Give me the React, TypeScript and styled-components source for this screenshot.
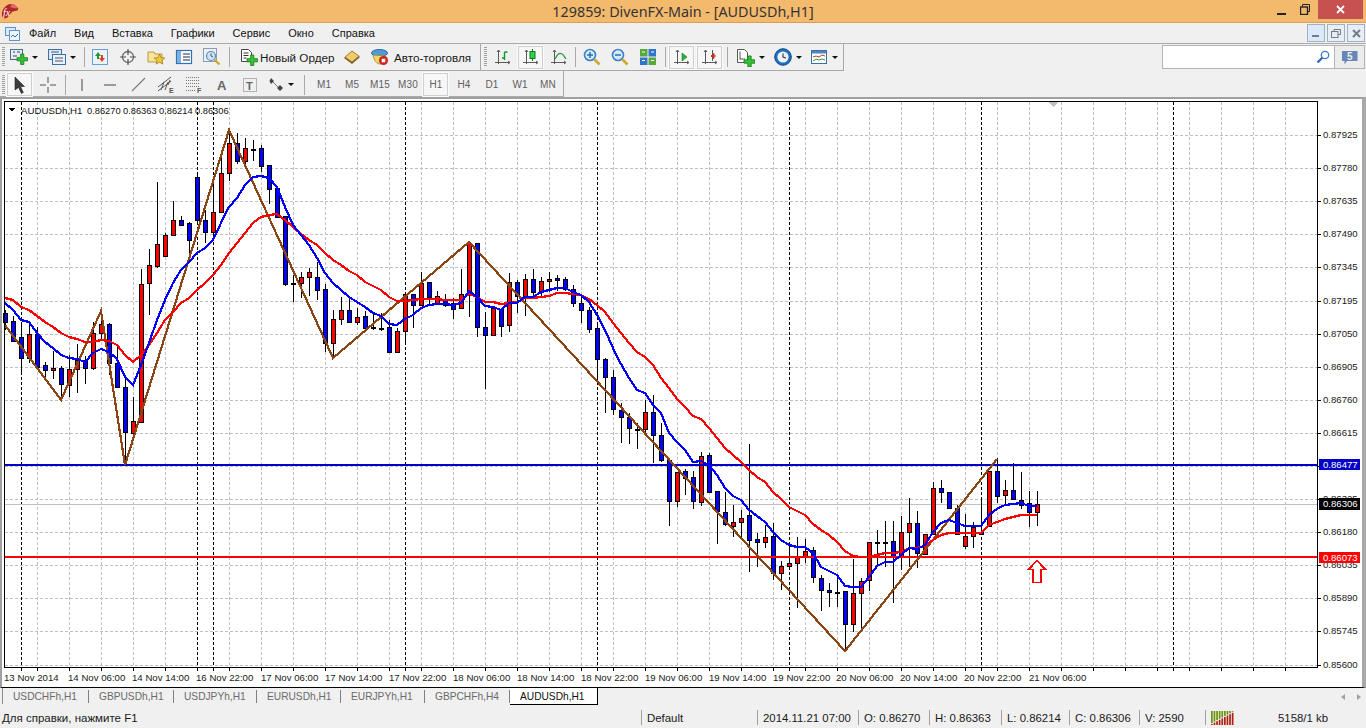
import React from "react";
import styled, { createGlobalStyle } from "styled-components";

const Global = createGlobalStyle`
  html, body { margin: 0; padding: 0; background: #f0f0f0; overflow: hidden; }
  #root { width: 1366px; height: 728px; }
`;

const FONT = `"Liberation Sans", Arial, sans-serif`;

const Window = styled.div`
  width: 1366px;
  height: 728px;
  display: flex;
  flex-direction: column;
  font-family: ${FONT};
  color: #111;
  background: #f0f0f0;
  overflow: hidden;
`;

const TitleBar = styled.div`
  height: 22px;
  flex: none;
  display: grid;
  grid-template-columns: 1fr auto 1fr;
  align-items: center;
  background: #f3b96d;
  border-bottom: 1px solid #dc9f52;
`;
const TitleIconBox = styled.div`
  display: flex;
  padding-left: 1px;
`;
const TitleText = styled.div`
  font-family: "Noto Sans", ${FONT};
  font-size: 14.35px;
  color: #333;
  padding-top: 1px;
`;
const WinControls = styled.div`
  display: flex;
  justify-content: flex-end;
  align-items: flex-start;
  height: 22px;
  padding-right: 3px;
`;
const WinButton = styled.div<{ $w: number; $red?: boolean }>`
  width: ${(p) => p.$w}px;
  height: 19px;
  display: flex;
  align-items: center;
  justify-content: center;
  background: ${(p) => (p.$red ? "#c75050" : "transparent")};
`;

const MenuBar = styled.div`
  height: 20px;
  flex: none;
  display: flex;
  align-items: center;
  border-bottom: 1px solid #a9a9a9;
`;
const MenuIconBox = styled.div`
  width: 29px;
  display: flex;
  padding-left: 5px;
  box-sizing: border-box;
`;
const MenuItems = styled.div`
  display: flex;
  gap: 18px;
  font-size: 11px;
`;
const MdiButtons = styled.div`
  margin-left: auto;
  display: flex;
  gap: 2px;
  padding-right: 1px;
`;
const MdiButton = styled.div<{ $hot?: boolean }>`
  width: 16px;
  height: 16px;
  border: 1px solid #9fb1c2;
  background: ${(p) => (p.$hot ? "#dce9f8" : "#e9eef4")};
  display: flex;
  align-items: center;
  justify-content: center;
`;

const ToolRow = styled.div<{ $h: number }>`
  height: ${(p) => p.$h}px;
  flex: none;
  display: flex;
  align-items: stretch;
`;
const ToolGroup = styled.div<{ $w: number; $pt?: number }>`
  width: ${(p) => p.$w}px;
  box-sizing: border-box;
  flex: none;
  display: flex;
  align-items: center;
  padding-top: ${(p) => p.$pt ?? 0}px;
  border-right: 1px solid #a9a9a9;
  border-bottom: 1px solid #a9a9a9;
`;
const Grip = styled.div<{ $w: number; $ml: number }>`
  width: 3px;
  height: 20px;
  margin-left: ${(p) => p.$ml}px;
  margin-right: ${(p) => p.$w - 3 - p.$ml}px;
  flex: none;
  background: repeating-linear-gradient(to bottom, #a0a0a0 0 1px, transparent 1px 2px);
`;
const Sep = styled.div<{ $w: number }>`
  width: ${(p) => p.$w}px;
  flex: none;
  height: 20px;
  display: flex;
  justify-content: center;
  &::before {
    content: "";
    width: 1px;
    height: 100%;
    background: #a9a9a9;
  }
`;
const ToolBtn = styled.div<{ $w: number; $active?: boolean; $gap?: number; $pl?: number; $start?: boolean }>`
  width: ${(p) => p.$w}px;
  flex: none;
  height: 23px;
  box-sizing: border-box;
  display: flex;
  align-items: center;
  justify-content: ${(p) => (p.$start ? "flex-start" : "center")};
  gap: ${(p) => p.$gap ?? 4}px;
  padding-left: ${(p) => p.$pl ?? 0}px;
  font-size: 11.7px;
  white-space: nowrap;
  color: #1a1a1a;
  position: relative;
  ${(p) =>
    p.$active &&
    `&::before {
      content: "";
      position: absolute;
      top: 0; bottom: 0; left: 1px; right: 2px;
      border: 1px solid #cfcfcf;
      outline: 1px solid #fbfbfb;
      background: #f7f7f7;
    }
    & > * { position: relative; }`}
`;
const Caret = styled.span`
  width: 0;
  height: 0;
  border-left: 3.5px solid transparent;
  border-right: 3.5px solid transparent;
  border-top: 3.5px solid #111;
  flex: none;
`;
const TfLabel = styled.span`
  font-size: 10px;
  color: #606060;
  letter-spacing: 0.1px;
`;
const SearchArea = styled.div`
  margin-left: auto;
  padding: 1px 1px 0 0;
  display: flex;
  align-items: flex-start;
  height: 24px;
`;
const SearchBox = styled.div`
  height: 22px;
  background: #fff;
  border: 1px solid #b4b4b4;
  display: flex;
  align-items: center;
  justify-content: flex-end;
  padding-right: 4px;
  box-sizing: content-box;
  margin-right: -1px;
  width: 167px;
`;
const ChatBtn = styled.div`
  width: 29px;
  height: 22px;
  border: 1px solid #b4b4b4;
  background: #ececec;
  display: flex;
  align-items: center;
  justify-content: center;
`;

const ChartWindow = styled.div`
  height: 588px;
  flex: none;
  background: #fff;
  border-top: 2px solid #a0a0a0;
  border-left: 2px solid #a0a0a0;
  border-right: 4px solid #a8a8a8;
  border-bottom: 1px solid #000;
  display: flex;
`;
const ChartSvg = styled.svg`
  display: block;
  font-family: ${FONT};
`;
const AxisText = styled.text<{ $white?: boolean }>`
  font-size: 9.6px;
  fill: ${(p) => (p.$white ? "#fff" : "#1a1a1a")};
`;
const TimeText = styled.text`
  font-size: 9.65px;
  fill: #1a1a1a;
`;
const HeadText = styled.text<{ $small?: boolean }>`
  font-size: ${(p) => (p.$small ? 9.3 : 9.7)}px;
  fill: #111;
`;

const TabBar = styled.div`
  height: 19px;
  flex: none;
  display: flex;
  align-items: flex-start;
  padding-left: 2px;
  position: relative;
`;
const Tab = styled.div<{ $w: number; $active?: boolean }>`
  width: ${(p) => p.$w}px;
  height: 17px;
  box-sizing: border-box;
  flex: none;
  display: flex;
  align-items: center;
  font-size: 10.2px;
  padding-left: 10px;
  color: ${(p) => (p.$active ? "#111" : "#6b6b6b")};
  background: ${(p) => (p.$active ? "#fff" : "transparent")};
  border-right: ${(p) => (p.$active ? "1px solid #000" : "0")};
  border-bottom: ${(p) => (p.$active ? "1px solid #000" : "0")};
`;
const TabSep = styled.div`
  width: 1px;
  height: 13px;
  margin-top: 2px;
  background: #808080;
  flex: none;
`;
const TabFirstEdge = styled.div`
  width: 1px;
  height: 16px;
  background: #909090;
  flex: none;
`;
const TabScroll = styled.div`
  margin-left: auto;
  display: flex;
  gap: 12px;
  padding: 6px 5px 0 0;
`;
const ScrollArrow = styled.span<{ $right?: boolean }>`
  width: 0;
  height: 0;
  border-top: 3.5px solid transparent;
  border-bottom: 3.5px solid transparent;
  ${(p) => (p.$right ? "border-left: 4px solid #a0a0a0;" : "border-right: 4px solid #a0a0a0;")}
`;

const StatusBar = styled.div`
  flex: 1;
  display: flex;
  align-items: center;
  font-size: 11.4px;
  color: #1a1a1a;
  white-space: nowrap;
`;
const StatusHelp = styled.div`
  width: 641px;
  padding-left: 2px;
  box-sizing: border-box;
  flex: none;
  font-size: 11.5px;
`;
const StatusCell = styled.div<{ $w: number }>`
  width: ${(p) => p.$w}px;
  box-sizing: border-box;
  flex: none;
  height: 15px;
  border-left: 1px solid #a0a0a0;
  padding-left: 5px;
  display: flex;
  align-items: center;
  gap: 43px;
`;

/* ---------- icons ---------- */
const PlusPath = ({ x, y, s = 1 }: { x: number; y: number; s?: number }) => (
  <path
    transform={`translate(${x} ${y}) scale(${s})`}
    d="M3.5 0h3v3.5H10v3H6.5V10h-3V6.5H0v-3h3.5z"
    fill="#35c235"
    stroke="#1e7d1e"
    strokeWidth="0.8"
  />
);
const S = ({ w = 18, h = 18, children }: { w?: number; h?: number; children: React.ReactNode }) => (
  <svg width={w} height={h} viewBox={`0 0 ${w} ${h}`}>
    {children}
  </svg>
);
const AppLogo = () => (
  <S w={18} h={16}>
    <path d="M1 13C0 7 5 1 10 1c3 0 4 2 7 4 1 2-1 3-3 3-3 0-5 3-7 6-2 2-5 2-6-1z" fill="#b3262a" />
    <path d="M11 1c3 0 4 2 6 4-2 1-5 0-8-1z" fill="#e06a60" />
    <text x="2" y="13" fontFamily="Liberation Serif" fontStyle="italic" fontSize="10" fill="#fff">fx</text>
  </S>
);
const MenuDocIcon = () => (
  <S w={15} h={15}>
    <rect x="0.5" y="1.5" width="10" height="8" fill="#dce9f8" stroke="#5e93c9" />
    <rect x="4.5" y="4.5" width="10" height="10" fill="#eef4fb" stroke="#5e93c9" />
    <path d="M6 11l2-2 2 2 3-3" fill="none" stroke="#3a6ea5" />
  </S>
);
const NewChartIcon = () => (
  <S>
    <rect x="0.5" y="1.5" width="12" height="10" fill="#e4ecf5" stroke="#4a6d90" />
    <path d="M3 4h2M3 8h4M7 4h3" stroke="#444" />
    <PlusPath x={7} y={6} s={1.05} />
  </S>
);
const ProfilesIcon = () => (
  <S>
    <rect x="0.5" y="1.5" width="13" height="10" fill="#dce9f8" stroke="#3a6ea5" />
    <rect x="4.5" y="6.5" width="13" height="10" fill="#e8f1fb" stroke="#3a6ea5" />
    <path d="M7 10h8M7 13h8M3 4h8" stroke="#556" />
  </S>
);
const MarketIcon = () => (
  <S>
    <rect x="1.5" y="1.5" width="15" height="15" fill="#edf3fb" stroke="#6b9ed2" />
    <path d="M7 4l3 4H8v3H6V8H4z" fill="#1f9b2e" />
    <path d="M11 14l-3-4h2V7h2v3h2z" fill="#e0402a" />
  </S>
);
const CrossIcon = () => (
  <S>
    <circle cx="9" cy="9" r="5.5" fill="none" stroke="#666" strokeWidth="1.3" />
    <path d="M9 1v6M9 11v6M1 9h6M11 9h6" stroke="#555" strokeWidth="1.2" />
  </S>
);
const FolderStarIcon = () => (
  <S>
    <path d="M1 4h6l1 2h7v8H1z" fill="#f6e49a" stroke="#b89a3c" />
    <path d="M12.5 6l1.6 3.6 3.7.4-2.8 2.4.8 3.7-3.3-1.9-3.3 1.9.8-3.7L7.2 10l3.7-.4z" fill="#f2c53a" stroke="#a57f16" strokeWidth="0.8" />
  </S>
);
const ListIcon = () => (
  <S>
    <rect x="1.5" y="2.5" width="15" height="13" fill="#fff" stroke="#2e71b8" strokeWidth="1.2" />
    <rect x="2" y="3" width="4" height="12" fill="#7fb0e0" />
    <path d="M8 6h7M8 9h7M8 12h7" stroke="#225" />
  </S>
);
const TesterIcon = () => (
  <S>
    <rect x="0.5" y="0.5" width="13" height="13" fill="#eceff3" stroke="#8a9db2" />
    <circle cx="8" cy="8" r="4.5" fill="#cfe3f7" stroke="#5a88b8" strokeWidth="1.2" />
    <path d="M8 5.5V8l2 1" fill="none" stroke="#456" />
    <path d="M11.5 11.5l5 5" stroke="#cda52a" strokeWidth="2.2" />
  </S>
);
const NewOrderIcon = () => (
  <S w={18} h={18}>
    <path d="M1.5 1.5h7l3 3v9h-10z" fill="#fff" stroke="#444" />
    <path d="M3.5 5h5M3.5 7.5h5M3.5 10h3" stroke="#333" />
    <PlusPath x={7} y={7} s={1.05} />
  </S>
);
const BookIcon = () => (
  <S>
    <path d="M1 10l8-7 8 6-8 7z" fill="#7d5a1c" />
    <path d="M2 9l7-6 7 5-7 6z" fill="#efcb70" stroke="#9a7326" strokeWidth="0.8" />
  </S>
);
const AutoIcon = () => (
  <S>
    <ellipse cx="8.5" cy="5" rx="8" ry="3.5" fill="#4f9bd8" stroke="#2a6aa0" />
    <path d="M2 7c1 6 4 9 7 9s4-3 6-8z" fill="#f0d466" stroke="#a08a2a" strokeWidth="0.8" />
    <circle cx="12.5" cy="12.5" r="4.5" fill="#d0201a" />
    <rect x="10.7" y="10.7" width="3.6" height="3.6" fill="#fff" />
  </S>
);
const Axes = () => (
  <path d="M3.5 1v14M0 13.5h15M2 3l1.5-2L5 3M13 12l2 1.5-2 1.5" fill="none" stroke="#5a5a5a" />
);
const BarTypeIcon = () => (
  <S w={16} h={16}>
    <Axes />
    <path d="M9.5 3v8M9.5 3h3M7 9h2.5" stroke="#0d9a28" strokeWidth="1.4" fill="none" />
  </S>
);
const CandleTypeIcon = () => (
  <S w={16} h={16}>
    <Axes />
    <path d="M9.5 0v12" stroke="#0d7a20" />
    <rect x="7" y="2.5" width="5" height="7" fill="#2fd24a" stroke="#0d7a20" />
  </S>
);
const LineTypeIcon = () => (
  <S w={16} h={16}>
    <Axes />
    <path d="M4 10c2-4 4-7 7-5 2 1 3 4 4 5" fill="none" stroke="#2a9d3a" strokeWidth="1.3" />
  </S>
);
const ZoomIcon = ({ plus }: { plus?: boolean }) => (
  <S>
    <circle cx="7" cy="7" r="5.5" fill="#d6eafa" stroke="#3b82c4" strokeWidth="1.6" />
    <path d={plus ? "M4 7h6M7 4v6" : "M4 7h6"} stroke="#2a6db0" strokeWidth="1.5" />
    <path d="M11.5 11.5l5 5" stroke="#d0a82e" strokeWidth="2.6" />
  </S>
);
const TileIcon = () => (
  <S>
    <rect x="1" y="1" width="7.5" height="7.5" fill="#5aa83c" />
    <rect x="9.5" y="1" width="7.5" height="7.5" fill="#2f76c8" />
    <rect x="1" y="9.5" width="7.5" height="7.5" fill="#2f76c8" />
    <rect x="9.5" y="9.5" width="7.5" height="7.5" fill="#5aa83c" />
    <path d="M3 4h3M12 4h3M3 12.5h3M12 12.5h3" stroke="#fff" />
  </S>
);
const AutoScrollIcon = () => (
  <S w={16} h={16}>
    <Axes />
    <path d="M8 4l5 4-5 4z" fill="#2fae3a" stroke="#17772a" strokeWidth="0.6" />
  </S>
);
const ShiftIcon = () => (
  <S w={16} h={16}>
    <Axes />
    <path d="M10.5 1v11" stroke="#555" />
    <path d="M14 7H9M9 7l3-2.5v5z" fill="#c0321e" stroke="#c0321e" />
  </S>
);
const IndicatorIcon = () => (
  <S w={19} h={19}>
    <path d="M1.5 1.5h7l3 3v10h-10z" fill="#fff" stroke="#555" />
    <path d="M4 3.5v8M4 11h5" stroke="#555" />
    <PlusPath x={8} y={8} s={1.1} />
  </S>
);
const ClockIcon = () => (
  <S>
    <circle cx="9" cy="9" r="8.3" fill="#1f6fbe" stroke="#0f4a8c" />
    <circle cx="9" cy="9" r="5.6" fill="#eef4fa" />
    <path d="M9 5.5V9l3 1" fill="none" stroke="#333" strokeWidth="1.1" />
  </S>
);
const TemplateIcon = () => (
  <S>
    <rect x="1.5" y="2.5" width="15" height="13" fill="#fff" stroke="#3a6ea5" />
    <rect x="2" y="3" width="14" height="2.5" fill="#4e86c4" />
    <path d="M3 9l3-1 3 1 3-2 3 1" fill="none" stroke="#b0401c" />
    <path d="M3 13l3-2 3 1 3-1 3 1" fill="none" stroke="#2a9d3a" />
  </S>
);
const PointerIcon = () => (
  <S w={14} h={18}>
    <path d="M2 1l9.5 9.5H7.5l2.8 6-2 .9-2.7-6L2 14z" fill="#3d3d3d" stroke="#222" strokeWidth="0.6" />
  </S>
);
const ThinCross = () => (
  <S w={16} h={16}>
    <path d="M8 0v6M8 10v6M0 8h6M10 8h6" stroke="#555" />
  </S>
);
const VLineIcon = () => (
  <S w={4} h={14}>
    <path d="M2 1v12" stroke="#555" strokeWidth="1.1" />
  </S>
);
const HLineIcon = () => (
  <S w={14} h={4}>
    <path d="M1 2h12" stroke="#555" strokeWidth="1.1" />
  </S>
);
const TrendIcon = () => (
  <S w={15} h={15}>
    <path d="M1 14L14 1" stroke="#777" strokeWidth="1.1" />
  </S>
);
const ChannelIcon = () => (
  <S w={19} h={18}>
    <path d="M1 11L14 1M1 15L14 5M4 14l3-8M8 14l3-8M11 9l2-5" stroke="#555" fill="none" />
    <text x="12" y="17" fontFamily="Liberation Sans" fontSize="7" fontWeight="700" fill="#555">E</text>
  </S>
);
const FiboIcon = () => (
  <S w={19} h={17}>
    <path d="M1 1.5h14M1 4.5h14M1 7.5h14M1 10.5h14" stroke="#777" strokeDasharray="1 1" />
    <path d="M1 14.5h10" stroke="#777" strokeDasharray="1 1" />
    <text x="12" y="17" fontFamily="Liberation Sans" fontSize="7" fontWeight="700" fill="#555">F</text>
  </S>
);
const TextAIcon = () => (
  <S w={12} h={14}>
    <text x="1" y="12" fontFamily="Liberation Sans" fontSize="13" fontWeight="700" fill="#666">A</text>
  </S>
);
const TextTIcon = () => (
  <S w={14} h={14}>
    <rect x="0.5" y="0.5" width="13" height="13" fill="none" stroke="#777" strokeDasharray="1 1" />
    <text x="3" y="11.5" fontFamily="Liberation Sans" fontSize="11" fontWeight="700" fill="#666">T</text>
  </S>
);
const ArrowsIcon = () => (
  <S w={15} h={15}>
    <path d="M2 1l3 3-3 3-1.5-3zM11 8l3 3-3 3-3-3z" fill="#444" />
    <path d="M4 5l5 5" stroke="#777" />
  </S>
);
const MagnifierBlue = () => (
  <S w={14} h={14}>
    <circle cx="9" cy="5" r="3.7" fill="#fff" stroke="#3a78c8" strokeWidth="1.3" />
    <path d="M6.3 7.7L1.5 12.5" stroke="#2f62b5" strokeWidth="2.2" />
  </S>
);
const ChatIcon = () => (
  <S w={17} h={15}>
    <path d="M1 1h15.5v10H6l-2.5 3.5V11H1z" fill="#6a86b6" />
    <text x="6" y="10" fontFamily="Liberation Sans" fontSize="10" fontWeight="700" fill="#e9eef6">5</text>
  </S>
);
const MeterIcon = () => {
  const bars = Array.from({ length: 9 }, (_, i) => i);
  return (
    <S w={24} h={14}>
      {bars.map((i) => (
        <rect key={`g${i}`} x={i * 2.6} y={0} width={1.7} height={12 - i * 1.4} fill="#6f8f10" />
      ))}
      {bars.map((i) => (
        <rect key={`r${i}`} x={i * 2.6} y={13 - i * 1.4} width={1.7} height={1 + i * 1.4} fill="#b02010" />
      ))}
    </S>
  );
};

/* ---------- chart data (pixel rows read from the picture) ---------- */
type Candle = ["b" | "r", number, number, number, number] | ["d", number, number, number];
const candles: Candle[] = [
  ["b",310,330,313,322],["b",316,342,321,341],["b",322,373,337,358],["r",322,363,334,358],["b",327,367,334,367],
  ["b",362,379,365,370],["r",351,379,368,370],["b",366,397,368,384],["r",355,397,369,385],["r",344,393,360,369],
  ["b",356,384,360,368],["r",322,370,333,368],["r",312,340,324,333],["b",323,375,324,363],["b",345,388,363,387],
  ["b",379,463,387,432],["r",397,437,421,433],["r",269,423,284,422],["r",249,315,265,283],["r",182,268,244,266],
  ["r",233,256,235,256],["r",201,235,220,235],["b",216,226,220,225],["b",222,253,223,240],["b",172,224,177,220],
  ["b",210,243,220,232],["r",180,240,212,232],["r",158,213,173,212],["r",133,181,143,173],["b",133,164,143,161],
  ["r",138,167,148,161],["d",140,161,149],["b",145,172,148,166],["b",165,204,165,189],["b",188,218,188,217],
  ["b",216,286,216,284],["d",275,302,283],["r",272,298,277,283],["r",268,296,272,277],["b",262,300,277,290],
  ["b",284,352,289,343],["r",310,358,319,343],["r",297,325,310,319],["b",298,322,310,322],["r",308,325,317,322],
  ["b",311,329,316,328],["d",313,330,327],["d",313,331,328],["b",320,352,327,352],["r",328,353,331,352],
  ["r",294,343,294,331],["b",294,328,294,305],["r",272,305,283,305],["b",282,304,282,297],["r",291,304,296,304],
  ["b",294,307,299,305],["b",298,319,303,309],["r",269,308,294,308],["r",242,317,243,294],["b",243,337,243,327],
  ["b",312,389,327,335],["r",308,335,308,335],["b",308,337,309,326],["r",273,332,282,325],["b",280,313,282,296],
  ["r",274,316,279,297],["b",269,295,279,292],["r",277,298,281,292],["r",272,292,279,281],["b",275,291,278,280],
  ["b",277,291,279,289],["b",285,307,289,303],["b",296,323,303,310],["b",307,333,310,329],["b",323,380,328,359],
  ["b",358,413,359,377],["b",370,415,377,409],["b",403,443,410,417],["b",413,444,417,428],["d",423,449,429],
  ["r",400,432,412,429],["b",395,463,412,435],["b",423,462,435,460],["b",460,526,460,501],["r",472,507,472,501],
  ["b",469,495,471,478],["b",471,509,477,501],["r",452,506,456,502],["b",453,492,455,492],["b",491,544,491,511],
  ["b",492,526,512,524],["r",505,537,522,526],["r",510,540,518,522],["b",444,572,515,540],["b",533,567,539,542],
  ["r",525,548,537,542],["b",523,580,536,573],["r",561,590,566,573],["r",543,570,563,566],["r",537,608,557,563],
  ["r",539,563,551,557],["b",547,583,550,577],["b",575,611,578,590],["b",583,607,590,592],["d",577,607,592],
  ["b",591,650,591,624],["r",559,632,593,624],["r",578,628,581,593],["r",542,591,542,580],["d",530,567,542],
  ["d",521,567,542],["b",521,603,541,557],["r",516,570,532,557],["r",498,567,523,532],["b",511,568,523,553],
  ["r",534,555,534,554],["r",482,534,488,534],["b",480,503,488,492],["b",492,508,492,508],["b",505,535,508,534],
  ["r",514,549,536,546],["r",522,548,527,536],["b",497,534,532,533],["r",471,527,471,526],["b",458,503,471,496],
  ["r",480,505,490,495],["b",463,500,490,499],["b",472,509,500,505],["b",491,527,503,512],["r",491,526,504,512],
];
const blueMA = [
  303,310,320,322,333,342,348,355,358,359,362,353,349,352,359,377,385,365,343,320,
  300,283,270,262,253,248,240,223,207,198,185,177,176,178,187,207,225,235,245,258,
  273,283,290,297,302,307,313,316,324,325,319,315,308,305,304,304,305,303,291,297,
  306,307,310,303,303,297,297,292,290,288,288,292,295,302,315,330,348,364,378,390,
  393,405,413,433,442,450,462,461,465,475,488,496,500,510,516,522,532,540,545,547,
  547,553,567,571,575,586,587,587,577,566,562,562,555,548,549,545,532,523,520,523,
  526,526,526,515,509,505,504,503,506,506,
];
const redMA = [
  298,300,307,310,316,322,327,333,337,339,342,342,340,341,345,355,362,355,345,333,
  320,312,303,298,290,283,275,265,253,243,233,223,217,215,214,220,227,234,240,245,
  253,260,265,271,275,282,286,290,297,301,301,300,299,299,299,300,300,300,294,297,
  302,302,304,303,302,298,298,297,296,293,293,294,295,299,305,312,323,333,343,352,
  357,365,378,388,399,407,416,419,428,438,448,455,462,470,477,482,492,499,507,511,
  515,524,530,535,542,551,556,557,557,555,553,553,552,548,548,546,540,535,533,533,
  533,533,533,525,522,519,517,515,515,515,
];
const cx = (i: number) => 5 + 8 * i;
const pts = (a: number[]) => a.map((y, i) => `${cx(i)},${y}`).join(" ");
const zigzag = "5,325 61,400 101,311 125,465 229,130 333,358 469,242 845,651 997,459";

const gridYs = [135,168,201,234,267,301,334,367,400,433,466,499,532,565,598,631,665];
const gridXs = Array.from({ length: 41 }, (_, k) => 5 + 32 * k).slice(1);
const periodXs = [21, 197, 213, 405, 597, 789, 981, 1173];
const priceLabels: [string, number][] = [
  ["0.87925",135],["0.87780",168],["0.87635",201],["0.87490",234],["0.87345",267],["0.87195",301],
  ["0.87050",334],["0.86905",367],["0.86760",400],["0.86615",433],["0.86325",499],["0.86180",532],
  ["0.86035",565],["0.85890",598],["0.85745",631],["0.85600",665],
];
const timeLabels: [string, number][] = [
  ["13 Nov 2014",4],["14 Nov 06:00",68],["14 Nov 14:00",132],["16 Nov 22:00",196],["17 Nov 06:00",261],
  ["17 Nov 14:00",325],["17 Nov 22:00",389],["18 Nov 06:00",453],["18 Nov 14:00",517],["18 Nov 22:00",581],
  ["19 Nov 06:00",645],["19 Nov 14:00",709],["19 Nov 22:00",773],["20 Nov 06:00",836],["20 Nov 14:00",900],
  ["20 Nov 22:00",964],["21 Nov 06:00",1029],
];
const priceTags: [string, number, string][] = [
  ["0.86477", 459, "#0000c8"],
  ["0.86306", 498, "#000"],
  ["0.86073", 552, "#ff0000"],
];
const headValues: [string, number][] = [["0.86270", 87], ["0.86363", 123], ["0.86214", 159], ["0.86306", 195]];

const Chart = () => (
  <ChartSvg width={1360} height={588} viewBox="2 99 1360 588">
    <g shapeRendering="crispEdges">
      {gridYs.map((y) => (
        <line key={y} x1={5} x2={1317} y1={y + 0.5} y2={y + 0.5} stroke="#c0c0c0" strokeDasharray="3 2" />
      ))}
      {gridXs.map((x) => (
        <line key={x} x1={x + 0.5} x2={x + 0.5} y1={102} y2={667} stroke="#c0c0c0" strokeDasharray="3 2" />
      ))}
      {periodXs.map((x) => (
        <line key={x} x1={x + 0.5} x2={x + 0.5} y1={102} y2={667} stroke="#000" strokeDasharray="3 2" />
      ))}
      <line x1={5} x2={1317} y1={504.5} y2={504.5} stroke="#c0c0c0" />
      {candles.map((c, i) => {
        const x = cx(i);
        if (c[0] === "d") {
          return (
            <g key={i}>
              <rect x={x} y={c[1]} width={1} height={c[2] - c[1]} fill="#000" />
              <rect x={x - 2} y={c[3]} width={5} height={2} fill="#000" />
            </g>
          );
        }
        const h = Math.max(c[4] - c[3], 2);
        return (
          <g key={i}>
            <rect x={x} y={c[1]} width={1} height={c[2] - c[1]} fill="#000" />
            <rect x={x - 2} y={c[3]} width={5} height={h + 1} fill="#000" />
            <rect x={x - 1} y={c[3] + 1} width={3} height={h - 1} fill={c[0] === "b" ? "#0000ff" : "#ff0000"} />
          </g>
        );
      })}
      <line x1={5} x2={1317} y1={465} y2={465} stroke="#0000c8" strokeWidth={2} />
      <line x1={5} x2={1317} y1={557} y2={557} stroke="#ff0000" strokeWidth={2} />
      <polyline points={zigzag} fill="none" stroke="#8b4513" strokeWidth={2.2} />
      <polyline points={pts(redMA)} fill="none" stroke="#ff0000" strokeWidth={2.2} />
      <polyline points={pts(blueMA)} fill="none" stroke="#0000ff" strokeWidth={2.2} />
      <path d="M1037 560.5l8.5 9h-4.5v13h-8v-13h-4.5z" fill="#fff" stroke="#ff0000" strokeWidth={1.8} />
      <rect x={4.5} y={101.5} width={1313} height={566} fill="none" stroke="#000" />
      {gridYs.map((y) => (
        <line key={y} x1={1318} x2={1321} y1={y + 0.5} y2={y + 0.5} stroke="#000" />
      ))}
      {gridXs.map((x) => (
        <line key={x} x1={x + 0.5} x2={x + 0.5} y1={668} y2={671} stroke="#000" />
      ))}
      {periodXs.map((x) => (
        <line key={x} x1={x + 0.5} x2={x + 0.5} y1={668} y2={671} stroke="#000" />
      ))}
      <path d="M1049 102h9l-4.5 5z" fill="#c0c0c0" />
      <path d="M8 108h7l-3.5 3.5z" fill="#000" />
    </g>
    <HeadText x={21} y={114}>AUDUSDh,H1</HeadText>
    {headValues.map(([t, x]) => (
      <HeadText key={x} $small x={x} y={114}>{t}</HeadText>
    ))}
    {priceLabels.map(([t, y]) => (
      <AxisText key={t} x={1323} y={y + 3}>{t}</AxisText>
    ))}
    {priceTags.map(([t, y, c]) => (
      <g key={t}>
        <rect x={1319} y={y} width={41} height={c === "#000" ? 12 : 11} fill={c} shapeRendering="crispEdges" />
        <AxisText $white x={1323} y={y + 9}>{t}</AxisText>
      </g>
    ))}
    {timeLabels.map(([t, x]) => (
      <TimeText key={t} x={x} y={681}>{t}</TimeText>
    ))}
  </ChartSvg>
);

const menu = ["Файл", "Вид", "Вставка", "Графики", "Сервис", "Окно", "Справка"];
const timeframes = ["M1", "M5", "M15", "M30", "H1", "H4", "D1", "W1", "MN"];
const tabs: [string, number][] = [
  ["USDCHFh,H1", 85],
  ["GBPUSDh,H1", 84],
  ["USDJPYh,H1", 82],
  ["EURUSDh,H1", 83],
  ["EURJPYh,H1", 83],
  ["GBPCHFh,H4", 84],
];

export default function App() {
  return (
    <Window>
      <Global />
      <TitleBar>
        <TitleIconBox>
          <AppLogo />
        </TitleIconBox>
        <TitleText>129859: DivenFX-Main - [AUDUSDh,H1]</TitleText>
        <WinControls>
          <WinButton $w={22}>
            <svg width="9" height="10" viewBox="0 0 9 10"><rect x="0" y="8" width="9" height="2.4" fill="#222" /></svg>
          </WinButton>
          <WinButton $w={26}>
            <svg width="10" height="11" viewBox="0 0 10 11">
              <path d="M2.5 2.5V.5h7v7h-2" fill="none" stroke="#222" />
              <rect x="0.5" y="3" width="7" height="7.5" fill="none" stroke="#222" strokeWidth="1.4" />
            </svg>
          </WinButton>
          <WinButton $w={45} $red>
            <svg width="9" height="9" viewBox="0 0 9 9"><path d="M1 1l7 7M8 1L1 8" stroke="#fff" strokeWidth="1.8" /></svg>
          </WinButton>
        </WinControls>
      </TitleBar>

      <MenuBar>
        <MenuIconBox>
          <MenuDocIcon />
        </MenuIconBox>
        <MenuItems>
          {menu.map((m) => (
            <span key={m}>{m}</span>
          ))}
        </MenuItems>
        <MdiButtons>
          <MdiButton $hot>
            <svg width="8" height="8" viewBox="0 0 8 8"><rect x="0" y="6" width="7" height="2" fill="#6f7f90" /></svg>
          </MdiButton>
          <MdiButton>
            <svg width="10" height="9" viewBox="0 0 10 9">
              <path d="M3 2V.5h6.5v5H7" fill="none" stroke="#6f7f90" />
              <rect x="0.5" y="2.5" width="6.5" height="6" fill="none" stroke="#6f7f90" />
            </svg>
          </MdiButton>
          <MdiButton>
            <svg width="9" height="9" viewBox="0 0 9 9"><path d="M1 1l7 7M8 1L1 8" stroke="#6f7f90" strokeWidth="2" /></svg>
          </MdiButton>
        </MdiButtons>
      </MenuBar>

      <ToolRow $h={27}>
        <ToolGroup $w={481}>
          <Grip $ml={2} $w={6} />
          <ToolBtn $w={35}><NewChartIcon /><Caret /></ToolBtn>
          <ToolBtn $w={41}><ProfilesIcon /><Caret /></ToolBtn>
          <Sep $w={4} />
          <ToolBtn $w={28}><MarketIcon /></ToolBtn>
          <ToolBtn $w={28}><CrossIcon /></ToolBtn>
          <ToolBtn $w={28}><FolderStarIcon /></ToolBtn>
          <ToolBtn $w={28}><ListIcon /></ToolBtn>
          <ToolBtn $w={28}><TesterIcon /></ToolBtn>
          <Sep $w={6} />
          <ToolBtn $w={106} $start $pl={8} $gap={2}><NewOrderIcon />Новый Ордер</ToolBtn>
          <ToolBtn $w={28}><BookIcon /></ToolBtn>
          <ToolBtn $w={110} $start $pl={5} $gap={5}><AutoIcon />Авто-торговля</ToolBtn>
        </ToolGroup>
        <ToolGroup $w={363}>
          <Grip $ml={3} $w={8} />
          <ToolBtn $w={28}><BarTypeIcon /></ToolBtn>
          <ToolBtn $w={28} $active><CandleTypeIcon /></ToolBtn>
          <ToolBtn $w={28}><LineTypeIcon /></ToolBtn>
          <Sep $w={5} />
          <ToolBtn $w={28}><ZoomIcon plus /></ToolBtn>
          <ToolBtn $w={28}><ZoomIcon /></ToolBtn>
          <ToolBtn $w={28}><TileIcon /></ToolBtn>
          <Sep $w={6} />
          <ToolBtn $w={28} $active><AutoScrollIcon /></ToolBtn>
          <ToolBtn $w={28} $active><ShiftIcon /></ToolBtn>
          <Sep $w={6} />
          <ToolBtn $w={40}><IndicatorIcon /><Caret /></ToolBtn>
          <ToolBtn $w={35}><ClockIcon /><Caret /></ToolBtn>
          <ToolBtn $w={37}><TemplateIcon /><Caret /></ToolBtn>
        </ToolGroup>
        <SearchArea>
          <SearchBox><MagnifierBlue /></SearchBox>
          <ChatBtn><ChatIcon /></ChatBtn>
        </SearchArea>
      </ToolRow>

      <ToolRow $h={26}>
        <ToolGroup $w={564} $pt={2}>
          <Grip $ml={2} $w={6} />
          <ToolBtn $w={28} $active><PointerIcon /></ToolBtn>
          <ToolBtn $w={28}><ThinCross /></ToolBtn>
          <Sep $w={6} />
          <ToolBtn $w={28}><VLineIcon /></ToolBtn>
          <ToolBtn $w={28}><HLineIcon /></ToolBtn>
          <ToolBtn $w={28}><TrendIcon /></ToolBtn>
          <ToolBtn $w={28}><ChannelIcon /></ToolBtn>
          <ToolBtn $w={28}><FiboIcon /></ToolBtn>
          <ToolBtn $w={28}><TextAIcon /></ToolBtn>
          <ToolBtn $w={28}><TextTIcon /></ToolBtn>
          <ToolBtn $w={35}><ArrowsIcon /><Caret /></ToolBtn>
          <Sep $w={11} />
          {timeframes.map((t) => (
            <ToolBtn key={t} $w={28} $active={t === "H1"}><TfLabel>{t}</TfLabel></ToolBtn>
          ))}
        </ToolGroup>
      </ToolRow>

      <ChartWindow>
        <Chart />
      </ChartWindow>

      <TabBar>
        <TabFirstEdge />
        {tabs.map(([t, w]) => (
          <React.Fragment key={t}>
            <Tab $w={w}>{t}</Tab>
            <TabSep />
          </React.Fragment>
        ))}
        <Tab $w={88} $active>AUDUSDh,H1</Tab>
        <TabScroll>
          <ScrollArrow />
          <ScrollArrow $right />
        </TabScroll>
      </TabBar>

      <StatusBar>
        <StatusHelp>Для справки, нажмите F1</StatusHelp>
        <StatusCell $w={116}>Default</StatusCell>
        <StatusCell $w={101}>2014.11.21 07:00</StatusCell>
        <StatusCell $w={71}>O: 0.86270</StatusCell>
        <StatusCell $w={72}>H: 0.86363</StatusCell>
        <StatusCell $w={68}>L: 0.86214</StatusCell>
        <StatusCell $w={70}>C: 0.86306</StatusCell>
        <StatusCell $w={66}>V: 2590</StatusCell>
        <StatusCell $w={161}><MeterIcon />5158/1 kb</StatusCell>
      </StatusBar>
    </Window>
  );
}
